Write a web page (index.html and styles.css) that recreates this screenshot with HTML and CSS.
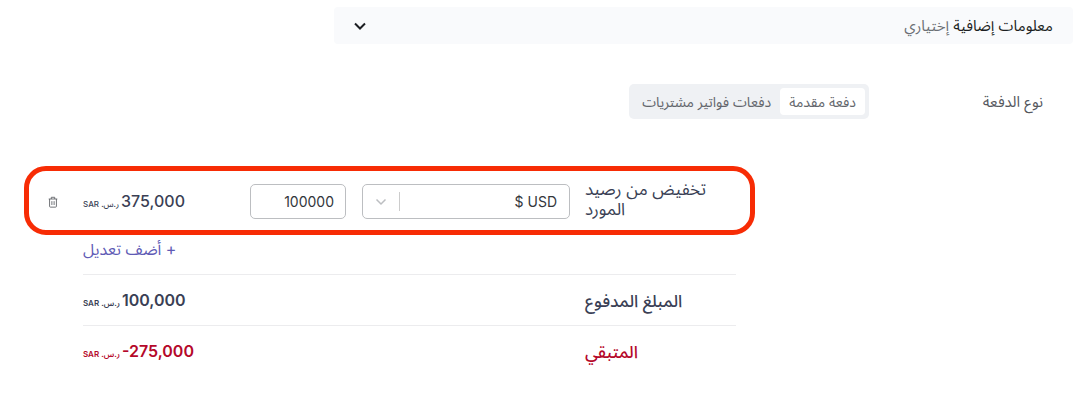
FILE: index.html
```html
<!DOCTYPE html>
<html lang="ar" dir="rtl">
<head>
    <meta charset="UTF-8">
    <title>نوع الدفعة</title>
    <link rel="stylesheet" href="styles.css">
</head>
<body>
    <button type="button" class="extra-info">
        <span>معلومات إضافية <span class="optional">إختياري</span></span>
        <svg class="arrow" viewBox="0 0 12 8" width="12" height="8"><path d="M1 1.5 L6 6.5 L11 1.5"/></svg>
    </button>

    <div class="payment-type">
        <span class="type-label">نوع الدفعة</span>
        <div class="tabs">
            <button type="button" class="tab active">دفعة مقدمة</button>
            <button type="button" class="tab">دفعات فواتير مشتريات</button>
        </div>
    </div>

    <form class="summary">
        <div class="adjustment">
            <label class="name" for="currency">تخفيض من رصيد المورد</label>
            <div class="select-box">
                <select id="currency" name="currency">
                    <option value="USD">$ USD</option>
                    <option value="SAR">SAR</option>
                </select>
                <svg class="select-arrow" viewBox="0 0 12 8" width="12" height="8"><path d="M1.5 1.5 L6 6 L10.5 1.5"/></svg>
            </div>
            <input type="text" class="value" name="value" value="100000" aria-label="تخفيض من رصيد المورد">
            <div class="amount" dir="ltr"><small><bdi>SAR</bdi> <bdi dir="rtl">ر.س.</bdi></small><span>375,000</span></div>
            <button type="button" class="delete" aria-label="حذف">
                <svg viewBox="0 0 12 14" width="12" height="12"><path d="M1 3.5h10M4 3.5v-2h4v2M2 3.5v8.5q0 1 1 1h6q1 0 1-1V3.5M4.7 6v4.5M7.3 6v4.5"/></svg>
            </button>
        </div>

        <div class="totals">
            <a href="#" class="add">+ أضف تعديل</a>
            <div class="total">
                <span class="name">المبلغ المدفوع</span>
                <div class="amount" dir="ltr"><small><bdi>SAR</bdi> <bdi dir="rtl">ر.س.</bdi></small><span>100,000</span></div>
            </div>
            <div class="total remaining">
                <span class="name">المتبقي</span>
                <div class="amount" dir="ltr"><small><bdi>SAR</bdi> <bdi dir="rtl">ر.س.</bdi></small><span>-275,000</span></div>
            </div>
        </div>
    </form>
</body>
</html>
```

FILE: styles.css
```css
* {
    box-sizing: border-box;
}

body {
    margin: 0;
    padding-top: 7px;
    background-color: #ffffff;
    color: #3a3f55;
    font-family: Inter, "Noto Sans Arabic", "Noto Sans", "DejaVu Sans", sans-serif;
    font-size: 14px;
}

button, input, select {
    font-family: inherit;
    font-size: 14px;
}

button {
    border: none;
    background: none;
    cursor: pointer;
}

svg {
    fill: none;
    stroke: currentColor;
}

.extra-info {
    display: flex;
    justify-content: space-between;
    align-items: center;
    width: calc(69% - 8px);
    height: 37px;
    margin-right: 9px;
    padding: 0 20px;
    border-radius: 4px;
    background-color: #f9fafc;
    color: #1c1e22;
    font-size: 15px;
}

.optional {
    color: #6c7076;
}

.arrow {
    stroke-width: 2;
}

.payment-type {
    display: flex;
    align-items: center;
    margin: 40px 39px 0;
    color: #55585e;
}

.type-label {
    width: 174px;
    font-size: 15px;
}

.tabs {
    display: flex;
    height: 35px;
    padding: 4px;
    border-radius: 5px;
    background-color: #eff1f4;
}

.tab {
    padding: 0 9px;
    border-radius: 4px;
    color: #63666c;
}

.active {
    background-color: #ffffff;
}

.summary {
    margin: 47px 327px 0 24px;
}

.adjustment {
    display: flex;
    align-items: center;
    height: 69px;
    padding: 2px 14px 0 18px;
    border: 5px solid #f72c05;
    border-radius: 22px;
}

.name {
    flex: none;
    width: 151px;
    padding-right: 30px;
    font-size: 17px;
    line-height: 20px;
    text-align: left;
}

.adjustment .name {
    padding-bottom: 6px;
}

.select-box {
    position: relative;
    width: 208px;
    margin: 0 15px 0 16px;
}

select, .value {
    height: 35px;
    border: 1px solid #bcbec1;
    border-radius: 5px;
    background-color: #ffffff;
    color: #33363b;
}

select {
    display: block;
    width: 100%;
    padding: 0 12px;
    appearance: none;
    direction: ltr;
    text-align: right;
}

.select-arrow {
    position: absolute;
    left: 13px;
    top: 14px;
    color: #bcbec1;
    stroke-width: 1.5;
}

.select-box::after {
    content: "";
    position: absolute;
    left: 37px;
    top: 8px;
    width: 1px;
    height: 19px;
    background-color: #cccccc;
}

.value {
    width: 96px;
    padding: 0 11px;
    direction: ltr;
    text-align: right;
}

.amount {
    flex: 1;
    font-size: 16px;
    font-weight: 500;
    text-align: left;
    white-space: nowrap;
}

.amount small {
    margin-right: 2px;
    font-size: 8px;
}

.delete {
    display: flex;
    padding: 0;
    margin-right: 24px;
    color: #5b5e63;
}

.totals {
    margin: 0 19px 0 59px;
}

.add {
    display: block;
    height: 39px;
    font-size: 16px;
    line-height: 28px;
    text-align: left;
    color: #605bb5;
    text-decoration: none;
}

.total {
    display: flex;
    align-items: center;
    height: 51px;
    padding-top: 1px;
    border-top: 1px solid #ececee;
}

.total .name {
    font-weight: 500;
}

.total .amount {
    font-weight: 600;
}

.remaining {
    color: #b5082a;
}
```
